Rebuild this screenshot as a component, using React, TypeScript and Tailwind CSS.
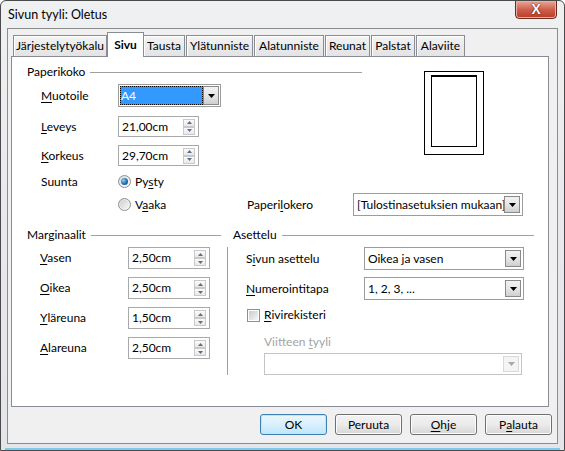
import React from "react";

// small helpers for the dialog controls
const U = ({ children }: { children: React.ReactNode }) => (
    <span className="underline decoration-1 underline-offset-[2px]">{children}</span>
);

const Arrow = ({ disabled }: { disabled?: boolean }) => (
    <svg width="7" height="4" viewBox="0 0 7 4">
        <path d="M0 0h7L3.5 4z" fill={disabled ? "#a8a8a8" : "#000"} />
    </svg>
);

const DropButton = ({ disabled }: { disabled?: boolean }) => (
    <div
        className={
            disabled
                ? "flex h-full w-[16px] shrink-0 items-center justify-center border border-[#d9d9d9] bg-[#f4f4f4]"
                : "flex h-full w-[16px] shrink-0 items-center justify-center border border-[#8a8a8a] bg-gradient-to-b from-[#f2f2f2] via-[#e6e6e6] to-[#cfcfcf]"
        }
    >
        <Arrow disabled={disabled} />
    </div>
);

type ComboProps = {
    text?: string;
    className: string;
    disabled?: boolean;
};

const Combo = ({ text, className, disabled }: ComboProps) => (
    <div
        className={`flex items-stretch border bg-white p-[2px] ${
            disabled ? "border-[#c4c4c4]" : "border-[#9c9c9c]"
        } ${className}`}
    >
        <div className="flex min-w-0 flex-1 items-center overflow-hidden whitespace-nowrap pl-[1px]">{text}</div>
        <DropButton disabled={disabled} />
    </div>
);

const SpinBtn = ({ up }: { up?: boolean }) => (
    <div className="flex h-[8px] w-[12px] items-center justify-center border border-[#c9c9c9] bg-gradient-to-b from-[#fbfbfb] to-[#e8e8e8]">
        <svg width="5" height="3" viewBox="0 0 5 3">
            <path d={up ? "M0 3h5L2.5 0z" : "M0 0h5L2.5 3z"} fill="#5a6f8f" />
        </svg>
    </div>
);

const Spin = ({ value, className }: { value: string; className: string }) => (
    <div className={`flex items-center border border-[#a9a9a9] bg-white pl-[3px] pr-[3px] ${className}`}>
        <span className="flex-1">{value}</span>
        <div className="flex flex-col">
            <SpinBtn up />
            <SpinBtn />
        </div>
    </div>
);

const Radio = ({ checked }: { checked?: boolean }) => (
    <div className="flex h-[13px] w-[13px] items-center justify-center rounded-full border border-[#8e8f8f] bg-gradient-to-br from-[#dcdcdc] to-[#fdfdfd]">
        {checked ? (
            <div className="h-[7px] w-[7px] rounded-full bg-[radial-gradient(circle_at_35%_35%,#8fd0f5,#1e6fae_55%,#0b3f72)]" />
        ) : (
            <div className="h-[9px] w-[9px] rounded-full bg-gradient-to-br from-[#cfcfcf] to-[#f7f7f7]" />
        )}
    </div>
);

const GroupHeader = ({ title, className }: { title: string; className: string }) => (
    <div className={`flex h-[16px] items-center ${className}`}>
        <span>{title}</span>
        <div className="ml-[5px] h-px flex-1 bg-[#a0a0a0]" />
    </div>
);

const tabs = [
    { name: "Järjestelytyökalu", w: "w-[95px]" },
    { name: "Sivu", w: "w-[37px]", active: true },
    { name: "Tausta", w: "w-[43px]" },
    { name: "Ylätunniste", w: "w-[68px]" },
    { name: "Alatunniste", w: "w-[71px]" },
    { name: "Reunat", w: "w-[46px]" },
    { name: "Palstat", w: "w-[45px]" },
    { name: "Alaviite", w: "w-[50px]" },
];

const Button = ({ children, def }: { children: React.ReactNode; def?: boolean }) => (
    <div
        className={
            def
                ? "flex h-[21px] w-[67px] items-center justify-center rounded-[3px] border border-[#3c7fb1] bg-gradient-to-b from-[#eaf6fd] via-[#d9f0fc] to-[#bee6fd] shadow-[inset_0_0_0_1px_#c4e5f6]"
                : "flex h-[21px] w-[67px] items-center justify-center rounded-[3px] border border-[#707070] bg-gradient-to-b from-[#f2f2f2] via-[#ebebeb] to-[#d6d6d6] shadow-[inset_0_0_0_1px_#fcfcfc]"
        }
    >
        {children}
    </div>
);

const App = () => {
    return (
        <div className="relative h-[451px] w-[565px] overflow-hidden rounded-t-[6px] border border-[#4a4a4a] bg-gradient-to-b from-[#eef0f2] via-[#e7e9ec] to-[#e3e5e8] font-[family-name:Lato,'Liberation_Sans',sans-serif] text-[12px] leading-[16px] text-black">
            {/* title bar */}
            <div className="flex h-[27px] items-center pl-[7px] pt-[1px] text-[12.5px]">Sivun tyyli: Oletus</div>

            {/* close button */}
            <div className="absolute right-[7px] top-[-1px] flex h-[19px] w-[42px] items-center justify-center rounded-b-[4px] border border-[#6e2a22] bg-gradient-to-b from-[#e8a898] via-[#cf5f4c] to-[#b73a25] shadow-[inset_0_0_0_1px_#e9b0a4]">
                <span className="text-[13px] font-bold leading-none text-white [text-shadow:0_0_2px_#3d0d06]">X</span>
            </div>

            {/* client area */}
            <div className="ml-[6px] h-[416px] w-[551px] border border-[#8d8d8d] bg-[#f0f0f0]">
                {/* tab strip */}
                <div className="flex h-[27px] items-end pl-[5px]">
                    {tabs.map((t) =>
                        t.active ? (
                            <div
                                key={t.name}
                                className={`relative z-10 -mx-[1px] -mb-[1px] flex h-[25px] items-start justify-center border border-b-0 border-[#898c95] bg-white pt-[4px] font-bold ${t.w}`}
                            >
                                {t.name}
                            </div>
                        ) : (
                            <div key={t.name} className={`flex h-[21px] pr-[1px] ${t.w}`}>
                                <div className="flex flex-1 items-center justify-center border border-b-0 border-[#898c95] bg-gradient-to-b from-[#f3f3f3] to-[#e3e3e3] shadow-[inset_0_1px_0_#ffffff,inset_1px_0_0_#ffffff]">
                                    {t.name}
                                </div>
                            </div>
                        )
                    )}
                </div>

                {/* page panel */}
                <div className="ml-[3px] h-[351px] w-[538px] border border-[#898c95] bg-white pl-[15px] pt-[7px]">
                    <div className="flex">
                        <div className="w-[335px]">
                            <GroupHeader title="Paperikoko" className="w-[335px]" />
                            <div className="mt-[4px] flex h-[23px] items-center">
                                <span className="w-[91px] pl-[14px]">
                                    <U>M</U>uotoile
                                </span>
                                <div className="flex h-[23px] w-[103px] border border-[#9c9c9c] bg-white p-[1px]">
                                    <div className="flex flex-1 items-center bg-[#3399ff] pl-[1px] text-white outline-1 outline-dotted outline-offset-[-1px] outline-black">
                                        A4
                                    </div>
                                    <DropButton />
                                </div>
                            </div>
                            <div className="mt-[9px] flex h-[21px] items-center">
                                <span className="w-[91px] pl-[14px]">
                                    <U>L</U>eveys
                                </span>
                                <Spin value="21,00cm" className="h-[21px] w-[81px]" />
                            </div>
                            <div className="mt-[8px] flex h-[21px] items-center">
                                <span className="w-[91px] pl-[14px]">
                                    <U>K</U>orkeus
                                </span>
                                <Spin value="29,70cm" className="h-[21px] w-[81px]" />
                            </div>
                            <div className="mt-[8px] flex h-[15px] items-center">
                                <span className="w-[91px] pl-[14px]">Suunta</span>
                                <Radio checked />
                                <span className="ml-[4px]">
                                    Py<U>s</U>ty
                                </span>
                            </div>
                        </div>
                        <div className="ml-[62px] mt-[7px] flex h-[84px] w-[60px] items-start justify-center border border-black pt-[3px]">
                            <div className="h-[72px] w-[46px] border border-t-2 border-black" />
                        </div>
                    </div>

                    <div className="mt-[4px] flex h-[23px] items-center">
                        <span className="w-[91px]" />
                        <div className="flex w-[129px] items-center">
                            <Radio />
                            <span className="ml-[4px]">
                                V<U>a</U>aka
                            </span>
                        </div>
                        <span className="w-[106px]">
                            Paperi<U>l</U>okero
                        </span>
                        <Combo text="[Tulostinasetuksien mukaan]" className="h-[23px] w-[170px]" />
                    </div>

                    {/* margins + layout */}
                    <div className="mt-[11px] flex">
                        <div className="w-[194px]">
                            <GroupHeader title="Marginaalit" className="w-[194px]" />
                            {[
                                ["V", "asen", "2,50cm"],
                                ["O", "ikea", "2,50cm"],
                                ["Y", "läreuna", "1,50cm"],
                                ["A", "lareuna", "2,50cm"],
                            ].map(([k, rest, val], i) => (
                                <div key={rest} className={`flex h-[22px] items-center ${i === 0 ? "mt-[4px]" : "mt-[8px]"}`}>
                                    <span className="w-[101px] pl-[13px]">
                                        <U>{k}</U>
                                        {rest}
                                    </span>
                                    <Spin value={val} className="h-[22px] w-[82px]" />
                                </div>
                            ))}
                        </div>
                        <div className="w-[12px] pl-[6px] pt-[20px]">
                            <div className="h-[128px] w-px bg-[#a0a0a0]" />
                        </div>
                        <div className="w-[301px]">
                            <GroupHeader title="Asettelu" className="w-[301px]" />
                            <div className="mt-[4px] flex h-[23px] items-center">
                                <span className="w-[131px] pl-[13px]">
                                    S<U>i</U>vun asettelu
                                </span>
                                <Combo text="Oikea ja vasen" className="h-[23px] w-[160px]" />
                            </div>
                            <div className="mt-[7px] flex h-[23px] items-center">
                                <span className="w-[131px] pl-[13px]">
                                    <U>N</U>umerointitapa
                                </span>
                                <Combo text="1, 2, 3, ..." className="h-[23px] w-[160px]" />
                            </div>
                            <div className="mt-[7px] flex h-[16px] items-center pl-[14px]">
                                <div className="flex h-[13px] w-[13px] items-center justify-center border border-[#8e8f8f] bg-white">
                                    <div className="h-[9px] w-[9px] bg-gradient-to-br from-[#cbcbcb] to-[#f6f6f6]" />
                                </div>
                                <span className="ml-[4px]">
                                    <U>R</U>ivirekisteri
                                </span>
                            </div>
                            <div className="mt-[11px] pl-[31px] text-[#a3a3a3]">
                                Viitteen <U>t</U>yyli
                            </div>
                            <div className="ml-[31px] mt-[3px]">
                                <Combo disabled className="h-[22px] w-[258px]" />
                            </div>
                        </div>
                    </div>
                </div>

                {/* buttons */}
                <div className="mt-[7px] flex justify-end gap-[8px] pr-[5px]">
                    <Button def>OK</Button>
                    <Button>Peruuta</Button>
                    <Button>
                        <U>O</U>hje
                    </Button>
                    <Button>
                        P<U>a</U>lauta
                    </Button>
                </div>
            </div>
            <div className="absolute bottom-0 left-[4px] right-[4px] h-[2px] bg-[#7ccbe8]" />
        </div>
    );
};

export default App;
